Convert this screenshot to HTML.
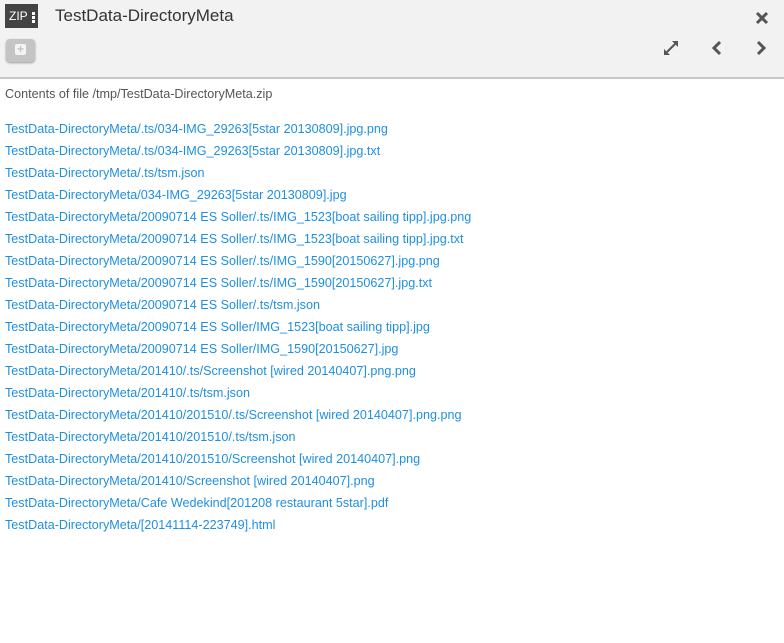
<html><head><style>
body{margin:0;width:784px;height:643px;background:#fff;font-family:"Liberation Sans",sans-serif;overflow:hidden}
.hd{position:absolute;left:0;top:0;width:784px;height:77px;background:#f2f2f2;border-bottom:2px solid #c8c8c8}
.zip{position:absolute;left:5px;top:4px;width:33px;height:24px;background:#444;color:#fff;font-size:12px;line-height:24px;padding-left:4px;box-sizing:border-box}
.dots{position:absolute;left:27px;top:8px;width:3px}
.dots i{display:block;width:3px;height:3px;background:#fff;margin-bottom:1px}
.title{position:absolute;left:55px;top:6px;font-size:17px;color:#333}
.add{position:absolute;left:6px;top:39px;width:29px;height:23px;background:#c4c4c4;border-radius:4px;box-shadow:0 1px 2px #999}
.add:after{content:"+";position:absolute;left:9px;top:5px;width:11px;height:11px;background:#f4f4f4;border-radius:2px;color:#c4c4c4;font-size:12px;line-height:11px;text-align:center;font-weight:bold}
.content{position:absolute;left:5px;top:85px;font-size:12.6px}
.c{color:#555;margin-bottom:15px;line-height:18px}
a{display:block;color:#1e8fe0;text-decoration:none;line-height:22px}
svg{position:absolute}
</style></head><body>
<div class="hd">
<div class="zip">ZIP<div class="dots"><i></i><i></i><i></i></div></div>
<div class="title">TestData-DirectoryMeta</div>
<div class="add"></div>
<svg style="left:755px;top:11px" width="14" height="14" viewBox="0 0 14 14"><path d="M2 2L12 12M12 2L2 12" stroke="#555" stroke-width="3"/></svg>
<svg style="left:663px;top:40px" width="16" height="16" viewBox="0 0 16 16"><path d="M4 12L12 4" stroke="#555" stroke-width="2"/><path d="M9 1h6v6zM1 9v6h6z" fill="#555"/></svg>
<svg style="left:711px;top:40px" width="12" height="16" viewBox="0 0 12 16"><path d="M9 2L3 8L9 14" stroke="#555" stroke-width="3" fill="none"/></svg>
<svg style="left:755px;top:40px" width="12" height="16" viewBox="0 0 12 16"><path d="M3 2L9 8L3 14" stroke="#555" stroke-width="3" fill="none"/></svg>
</div>
<div class="content">
<div class="c">Contents of file /tmp/TestData-DirectoryMeta.zip</div>
<a>TestData-DirectoryMeta/.ts/034-IMG_29263[5star 20130809].jpg.png</a>
<a>TestData-DirectoryMeta/.ts/034-IMG_29263[5star 20130809].jpg.txt</a>
<a>TestData-DirectoryMeta/.ts/tsm.json</a>
<a>TestData-DirectoryMeta/034-IMG_29263[5star 20130809].jpg</a>
<a>TestData-DirectoryMeta/20090714 ES Soller/.ts/IMG_1523[boat sailing tipp].jpg.png</a>
<a>TestData-DirectoryMeta/20090714 ES Soller/.ts/IMG_1523[boat sailing tipp].jpg.txt</a>
<a>TestData-DirectoryMeta/20090714 ES Soller/.ts/IMG_1590[20150627].jpg.png</a>
<a>TestData-DirectoryMeta/20090714 ES Soller/.ts/IMG_1590[20150627].jpg.txt</a>
<a>TestData-DirectoryMeta/20090714 ES Soller/.ts/tsm.json</a>
<a>TestData-DirectoryMeta/20090714 ES Soller/IMG_1523[boat sailing tipp].jpg</a>
<a>TestData-DirectoryMeta/20090714 ES Soller/IMG_1590[20150627].jpg</a>
<a>TestData-DirectoryMeta/201410/.ts/Screenshot [wired 20140407].png.png</a>
<a>TestData-DirectoryMeta/201410/.ts/tsm.json</a>
<a>TestData-DirectoryMeta/201410/201510/.ts/Screenshot [wired 20140407].png.png</a>
<a>TestData-DirectoryMeta/201410/201510/.ts/tsm.json</a>
<a>TestData-DirectoryMeta/201410/201510/Screenshot [wired 20140407].png</a>
<a>TestData-DirectoryMeta/201410/Screenshot [wired 20140407].png</a>
<a>TestData-DirectoryMeta/Cafe Wedekind[201208 restaurant 5star].pdf</a>
<a>TestData-DirectoryMeta/[20141114-223749].html</a>
</div>
</body></html>
